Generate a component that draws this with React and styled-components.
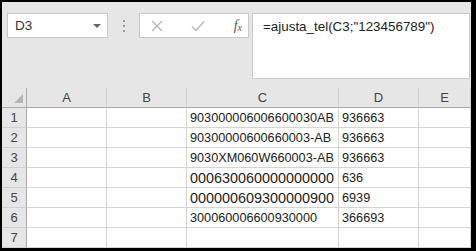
import { Fragment } from "react";
import styled, { createGlobalStyle } from "styled-components";

const GlobalStyle = createGlobalStyle`
  html, body {
    margin: 0;
    padding: 0;
    background: #000;
  }
  body {
    font-family: "Liberation Sans", Arial, sans-serif;
  }
`;

const Frame = styled.div`
  width: 476px;
  height: 251px;
  box-sizing: border-box;
  padding: 2px 5px 3px 2px;
  background: #000;
`;

const Window = styled.div`
  height: 100%;
  background: #e6e6e6;
  display: flex;
  flex-direction: column;
  overflow: hidden;
`;

const FormulaArea = styled.div`
  height: 86px;
  box-sizing: border-box;
  display: flex;
  align-items: flex-start;
  padding: 11px 1px 9px 5px;
`;

const NameBox = styled.div`
  width: 101px;
  height: 25px;
  box-sizing: border-box;
  background: #fff;
  border: 1px solid #c9c9c9;
  display: flex;
  align-items: center;
  justify-content: space-between;
  padding: 0 6px 0 7px;
  font-size: 13.5px;
  color: #333;
`;

const Caret = styled.span`
  width: 0;
  height: 0;
  border-left: 4px solid transparent;
  border-right: 4px solid transparent;
  border-top: 4px solid #666;
`;

const Grip = styled.div`
  width: 31px;
  height: 25px;
  display: flex;
  flex-direction: column;
  align-items: center;
  justify-content: center;
  gap: 3px;
`;

const Dot = styled.span`
  width: 2px;
  height: 2px;
  background: #9a9a9a;
`;

const ButtonsBox = styled.div`
  width: 110px;
  height: 25px;
  box-sizing: border-box;
  background: #fff;
  border: 1px solid #c9c9c9;
  display: flex;
  align-items: center;
  padding: 0 6px 0 11px;
  justify-content: space-between;
`;

const Fx = styled.span`
  font-family: "Liberation Serif", "Times New Roman", serif;
  font-style: italic;
  font-size: 14px;
  color: #555;
  i {
    font-style: italic;
  }
  sub {
    font-size: 10px;
    vertical-align: -1px;
  }
`;

const FormulaBar = styled.div`
  flex: 1;
  height: 66px;
  margin-left: 3px;
  box-sizing: border-box;
  background: #fff;
  border: 1px solid #c9c9c9;
  padding: 5px 0 0 10px;
  font-size: 13.4px;
  color: #222;
`;

const Grid = styled.div`
  display: grid;
  grid-template-columns: 25px 80px 80px 152px 80px 1fr;
  grid-auto-rows: 20px;
`;

const Corner = styled.div`
  position: relative;
  background: #e6e6e6;
  border-right: 1px solid #ababab;
  border-bottom: 1px solid #ababab;
  box-sizing: border-box;
`;

const Triangle = styled.span`
  position: absolute;
  right: 3px;
  bottom: 4px;
  width: 0;
  height: 0;
  border-left: 9px solid transparent;
  border-bottom: 9px solid #b5b5b5;
`;

const ColHead = styled.div`
  background: #e6e6e6;
  border-right: 1px solid #cfcfcf;
  border-bottom: 1px solid #ababab;
  box-sizing: border-box;
  display: flex;
  align-items: center;
  justify-content: center;
  font-size: 13px;
  color: #444;
`;

const RowHead = styled.div`
  background: #e6e6e6;
  border-right: 1px solid #ababab;
  border-bottom: 1px solid #cfcfcf;
  box-sizing: border-box;
  display: flex;
  align-items: center;
  justify-content: center;
  font-size: 13px;
  color: #444;
`;

const Cell = styled.div`
  background: #fff;
  border-right: 1px solid #d4d4d4;
  border-bottom: 1px solid #d4d4d4;
  box-sizing: border-box;
  display: flex;
  align-items: center;
  padding-left: 3px;
  font-size: ${(p) => (p.$big ? "14.4px" : "12.7px")};
  color: #222;
  white-space: nowrap;
  overflow: hidden;
`;

const rows = [
  ["903000006006600030AB", "936663"],
  ["90300000600660003-AB", "936663"],
  ["9030XM060W660003-AB", "936663"],
  ["000630060000000000", "636", true],
  ["000000609300000900", "6939", true],
  ["300060006600930000", "366693"],
  ["", ""],
];

const App = () => (
  <Frame>
    <GlobalStyle />
    <Window>
      <FormulaArea>
        <NameBox>
          D3
          <Caret />
        </NameBox>
        <Grip>
          <Dot />
          <Dot />
          <Dot />
        </Grip>
        <ButtonsBox>
          <svg width="12" height="12" viewBox="0 0 12 12">
            <path d="M1 1 L11 11 M11 1 L1 11" stroke="#b8b8b8" strokeWidth="1.4" />
          </svg>
          <svg width="14" height="12" viewBox="0 0 14 12">
            <path d="M1 6.5 L5 10.5 L13 1.5" stroke="#b8b8b8" strokeWidth="1.4" fill="none" />
          </svg>
          <Fx>
            <i>f</i>
            <sub>x</sub>
          </Fx>
        </ButtonsBox>
        <FormulaBar>=ajusta_tel(C3;"123456789")</FormulaBar>
      </FormulaArea>
      <Grid>
        <Corner>
          <Triangle />
        </Corner>
        {["A", "B", "C", "D", "E"].map((c) => (
          <ColHead key={c}>{c}</ColHead>
        ))}
        {rows.map(([c, d, big], i) => (
          <Fragment key={i}>
            <RowHead>{i + 1}</RowHead>
            <Cell />
            <Cell />
            <Cell $big={big}>{c}</Cell>
            <Cell>{d}</Cell>
            <Cell />
          </Fragment>
        ))}
      </Grid>
    </Window>
  </Frame>
);

export default App;
